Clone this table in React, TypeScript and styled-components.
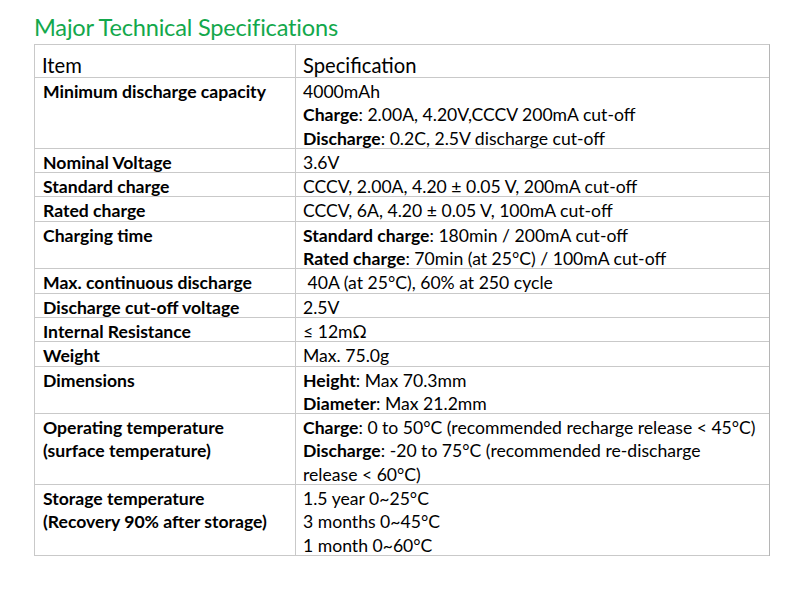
import React from "react";
import styled, { createGlobalStyle } from "styled-components";

const Global = createGlobalStyle`
  html, body { margin: 0; padding: 0; background: #ffffff; }
  body { font-family: Lato, "Open Sans", sans-serif; color: #000; }
`;

const Page = styled.div`
  width: 800px;
  height: 605px;
  padding: 15px 0 0 34px;
  box-sizing: border-box;
`;

const Title = styled.h1`
  margin: 0 0 4px 0;
  font-family: Lato, sans-serif;
  font-weight: 400;
  font-size: 23.6px;
  line-height: 25px;
  color: #13a84c;
  letter-spacing: -0.2px;
`;

const Table = styled.div`
  width: 736px;
  display: grid;
  grid-template-columns: 260px 1fr;
  border-top: 1px solid #c9c9c9;
  border-left: 1px solid #c9c9c9;
  border-right: 1px solid #b5b5b5;
  box-sizing: border-box;
`;

const Cell = styled.div<{ $head?: boolean; $first?: boolean }>`
  border-bottom: 1px solid #c9c9c9;
  border-left: ${(p) => (p.$first ? "none" : "1px solid #c9c9c9")};
  padding: ${(p) => (p.$head ? "7px 8px 0 7px" : p.$first ? "0 8px" : "0 7px")};
  height: ${(p) => (p.$head ? "33px" : "auto")};
  box-sizing: border-box;
  font-size: ${(p) => (p.$head ? "20.2px" : "17.6px")};
  line-height: ${(p) => (p.$head ? "26px" : "23.3px")};
  font-weight: ${(p) => (p.$first && !p.$head ? 700 : 400)};
  color: #000;
`;

const Line = styled.div`
  white-space: nowrap;
  padding-top: 2px;
  margin-bottom: -2px;
`;

const B = styled.b`
  font-weight: 700;
`;

type Row = { item: string[]; spec: React.ReactNode[] };

const rows: Row[] = [
  {
    item: ["Minimum discharge capacity"],
    spec: [
      "4000mAh",
      <><B>Charge</B>: 2.00A, 4.20V,CCCV 200mA cut-off</>,
      <><B>Discharge</B>: 0.2C, 2.5V discharge cut-off</>,
    ],
  },
  { item: ["Nominal Voltage"], spec: ["3.6V"] },
  { item: ["Standard charge"], spec: ["CCCV, 2.00A, 4.20 ± 0.05 V, 200mA cut-off"] },
  { item: ["Rated charge"], spec: ["CCCV, 6A, 4.20 ± 0.05 V, 100mA cut-off"] },
  {
    item: ["Charging time"],
    spec: [
      <><B>Standard charge</B>: 180min / 200mA cut-off</>,
      <><B>Rated charge</B>: 70min (at 25°C) / 100mA cut-off</>,
    ],
  },
  { item: ["Max. continuous discharge"], spec: ["\u00a040A (at 25°C), 60% at 250 cycle"] },
  { item: ["Discharge cut-off voltage"], spec: ["2.5V"] },
  { item: ["Internal Resistance"], spec: ["≤ 12mΩ"] },
  { item: ["Weight"], spec: ["Max. 75.0g"] },
  {
    item: ["Dimensions"],
    spec: [
      <><B>Height</B>: Max 70.3mm</>,
      <><B>Diameter</B>: Max 21.2mm</>,
    ],
  },
  {
    item: ["Operating temperature", "(surface temperature)"],
    spec: [
      <><B>Charge</B>: 0 to 50°C (recommended recharge release &lt; 45°C)</>,
      <><B>Discharge</B>: -20 to 75°C (recommended re-discharge</>,
      "release < 60°C)",
    ],
  },
  {
    item: ["Storage temperature", "(Recovery 90% after storage)"],
    spec: ["1.5 year 0~25°C", "3 months 0~45°C", "1 month 0~60°C"],
  },
];

export default function App() {
  return (
    <Page>
      <Global />
      <Title>Major Technical Specifications</Title>
      <Table>
        <Cell $head $first>Item</Cell>
        <Cell $head>Specification</Cell>
        {rows.map((r, i) => (
          <React.Fragment key={i}>
            <Cell $first>
              {r.item.map((t, j) => (
                <Line key={j}>{t}</Line>
              ))}
            </Cell>
            <Cell>
              {r.spec.map((s, j) => (
                <Line key={j}>{s}</Line>
              ))}
            </Cell>
          </React.Fragment>
        ))}
      </Table>
    </Page>
  );
}
